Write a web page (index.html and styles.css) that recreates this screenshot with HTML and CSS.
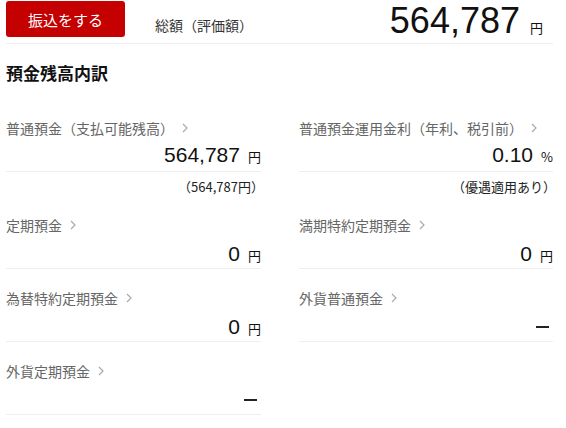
FILE: index.html
```html
<!DOCTYPE html>
<html>
<head>
    <title>預金残高</title>
    <link rel="stylesheet" href="styles.css">
</head>
<body>
    <div class="page">
        <div class="summary">
            <button type="button" class="transfer-btn">振込をする</button>
            <span class="summary-label">総額（評価額）</span>
            <span class="summary-amount">564,787<span class="unit">円</span></span>
        </div>

        <h2 class="section-title">預金残高内訳</h2>

        <div class="breakdown">
            <div class="item item-lead">
                <a class="item-label" href="#">普通預金（支払可能残高）<svg class="chevron" width="6" height="10" viewBox="0 0 6 10"><path d="M1 1l4 4-4 4" fill="none" stroke="#aaa" stroke-width="1.2"/></svg></a>
                <div class="item-value">564,787<span class="unit">円</span></div>
                <div class="item-note">（564,787円）</div>
            </div>
            <div class="item item-lead">
                <a class="item-label" href="#">普通預金運用金利（年利、税引前）<svg class="chevron" width="6" height="10" viewBox="0 0 6 10"><path d="M1 1l4 4-4 4" fill="none" stroke="#aaa" stroke-width="1.2"/></svg></a>
                <div class="item-value">0.10<span class="unit">%</span></div>
                <div class="item-note">（優遇適用あり）</div>
            </div>

            <div class="item">
                <a class="item-label" href="#">定期預金<svg class="chevron" width="6" height="10" viewBox="0 0 6 10"><path d="M1 1l4 4-4 4" fill="none" stroke="#aaa" stroke-width="1.2"/></svg></a>
                <div class="item-value">0<span class="unit">円</span></div>
            </div>
            <div class="item">
                <a class="item-label" href="#">満期特約定期預金<svg class="chevron" width="6" height="10" viewBox="0 0 6 10"><path d="M1 1l4 4-4 4" fill="none" stroke="#aaa" stroke-width="1.2"/></svg></a>
                <div class="item-value">0<span class="unit">円</span></div>
            </div>

            <div class="item">
                <a class="item-label" href="#">為替特約定期預金<svg class="chevron" width="6" height="10" viewBox="0 0 6 10"><path d="M1 1l4 4-4 4" fill="none" stroke="#aaa" stroke-width="1.2"/></svg></a>
                <div class="item-value">0<span class="unit">円</span></div>
            </div>
            <div class="item">
                <a class="item-label" href="#">外貨普通預金<svg class="chevron" width="6" height="10" viewBox="0 0 6 10"><path d="M1 1l4 4-4 4" fill="none" stroke="#aaa" stroke-width="1.2"/></svg></a>
                <div class="item-value"><span class="dash"></span></div>
            </div>

            <div class="item">
                <a class="item-label" href="#">外貨定期預金<svg class="chevron" width="6" height="10" viewBox="0 0 6 10"><path d="M1 1l4 4-4 4" fill="none" stroke="#aaa" stroke-width="1.2"/></svg></a>
                <div class="item-value"><span class="dash"></span></div>
            </div>
        </div>
    </div>
</body>
</html>
```

FILE: styles.css
```css
body {
    margin: 0;
    font-family: "Liberation Sans", "Noto Sans CJK JP", sans-serif;
    font-size: 14px;
    color: #222;
    background: #fff;
}

.page {
    padding: 1px 13px 0 6px;
}

.summary {
    display: flex;
    align-items: center;
    height: 36px;
    padding-bottom: 6px;
    border-bottom: 1px solid #eee;
}

.transfer-btn {
    width: 119px;
    height: 36px;
    border: none;
    border-radius: 3px;
    background-color: #c40000;
    color: #fff;
    font-family: "Noto Sans CJK JP", sans-serif;
    font-size: 15px;
    padding: 0;
    cursor: pointer;
}

.summary-label {
    margin-left: 30px;
    margin-top: 12px;
    font-family: "Noto Sans CJK JP", sans-serif;
    font-size: 14px;
    line-height: 20px;
    color: #333;
}

.summary-amount {
    margin-left: auto;
    margin-right: 10px;
    margin-top: 4px;
    font-size: 36px;
    line-height: 36px;
    color: #111;
    white-space: nowrap;
}

.summary-amount .unit {
    font-family: "Noto Sans CJK JP", sans-serif;
    font-size: 13px;
    line-height: 13px;
    margin-left: 10px;
}

.section-title {
    margin: 18px 0 0;
    font-family: "Noto Sans CJK JP", sans-serif;
    font-size: 17px;
    font-weight: bold;
    line-height: 22px;
    color: #111;
}

.breakdown {
    display: grid;
    grid-template-columns: 255px 254px;
    column-gap: 38px;
    margin-top: 34px;
}

.item {
    padding-top: 19px;
}

.item-lead {
    padding-top: 0;
}

.item-label {
    display: flex;
    align-items: center;
    height: 20px;
    font-family: "Noto Sans CJK JP", sans-serif;
    font-size: 14px;
    color: #666;
    text-decoration: none;
}

.chevron {
    margin-left: 8px;
}

.item-value {
    display: flex;
    justify-content: flex-end;
    align-items: baseline;
    margin-top: 5px;
    height: 28px;
    line-height: 28px;
    font-size: 21px;
    color: #111;
    border-bottom: 1px solid #eee;
}

.item-lead .item-value {
    margin-top: 3px;
    height: 30px;
}

.item-value .unit {
    font-family: "Noto Sans CJK JP", sans-serif;
    font-size: 13px;
    margin-left: 8px;
}

.dash {
    display: inline-block;
    width: 13px;
    height: 2px;
    background: #222;
    margin-right: 4px;
    align-self: center;
}

.item-note {
    margin-top: 7px;
    margin-right: -3px;
    padding-bottom: 1px;
    line-height: 16px;
    text-align: right;
    font-family: "Noto Sans CJK JP", sans-serif;
    font-size: 13px;
    color: #222;
}
```
